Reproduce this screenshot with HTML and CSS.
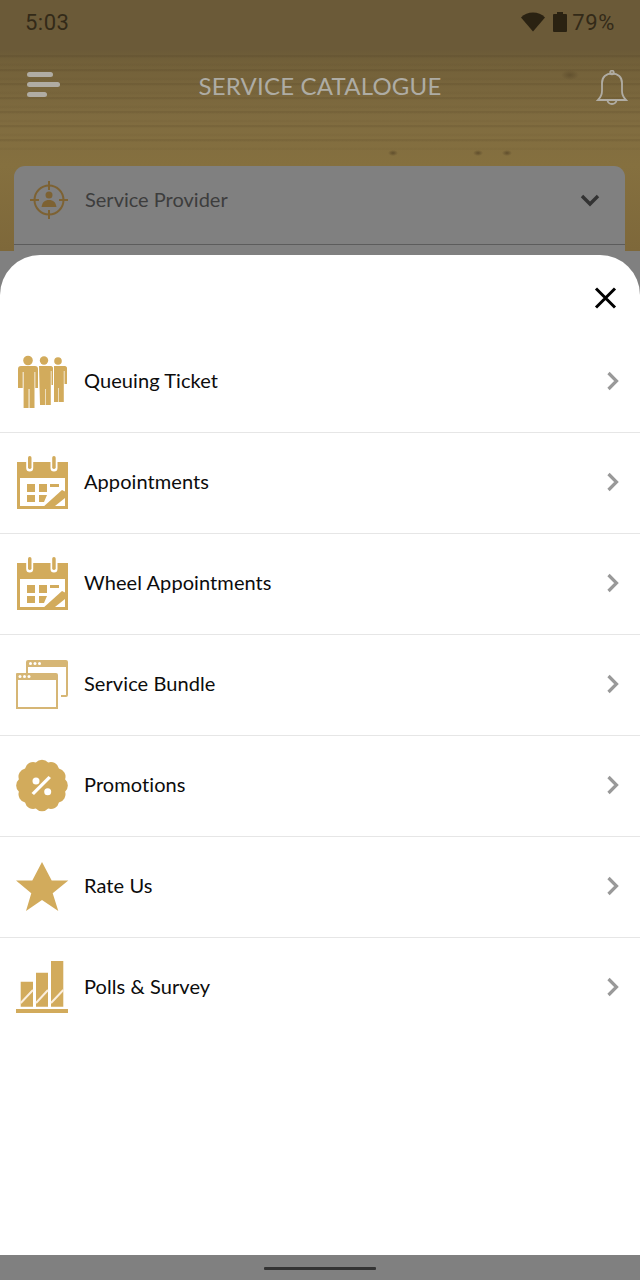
FILE: index.html
```html
<!DOCTYPE html>
<html lang="en">
<head>
<meta charset="utf-8">
<title>Service Catalogue</title>
<link rel="stylesheet" href="styles.css">
</head>
<body>
<div class="phone">
  <div class="screen">
    <div class="status">
      <span class="time">5:03</span>
      <div class="status-right">
        <svg class="wifi" width="24" height="20" viewBox="0 0 24 20"><path d="M0 5.500C3 2 7.500 0.500 12 0.500S21 2 24 5.500L12 19.500Z"/></svg>
        <svg class="battery" width="14" height="20" viewBox="0 0 14 20"><path d="M4 0h6v2h3a1 1 0 0 1 1 1v16a1 1 0 0 1-1 1H1a1 1 0 0 1-1-1V3a1 1 0 0 1 1-1h3z"/></svg>
        <span class="pct">79%</span>
      </div>
    </div>
    <header class="appbar">
      <div class="burger"><i class="b1"></i><i class="b2"></i><i class="b3"></i></div>
      <h1 class="title">SERVICE CATALOGUE</h1>
      <svg class="bell" width="32" height="36" viewBox="0 0 32 36"><path d="M2 30c3-3 4-5 4-9v-8C6 7 10 3.500 16 3.500S26 7 26 13v8c0 4 1 6 4 9Z"/><circle cx="16" cy="2.500" r="1.800"/><path d="M11.500 30a4.500 4 0 0 0 9 0"/></svg>
    </header>
    <div class="card">
      <div class="provider">
        <svg class="target" width="38" height="40" viewBox="0 0 38 40"><circle cx="19" cy="20" r="14.500"/><path d="M19 1v9M19 30v9M0 20h9M29 20h9"/><circle class="solid" cx="19" cy="15" r="3.500"/><path class="solid" d="M11.500 27c1-5 3-7 7.500-7s6.500 2 7.500 7Z"/></svg>
        <span class="provider-label">Service Provider</span>
        <svg class="caret" width="20" height="13" viewBox="0 0 20 13"><path d="M2 2l8 8 8-8"/></svg>
      </div>
    </div>
  </div>
  <div class="navbar"><span class="pill"></span></div>

  <section class="sheet">
    <div class="sheet-top">
      <svg class="close" width="24" height="24" viewBox="0 0 24 24"><path d="M3 2.500l19 19M22 2.500l-19 19"/></svg>
    </div>
    <ul class="menu">
      <li class="row">
        <svg class="ico" width="56" height="56" viewBox="0 0 56 56"><circle cx="44" cy="7" r="3.800"/><path d="M40 12h11c1 0 2 1 2 2v16h-2.500V17h-.7v31h-4.900V34h-.6v14h-4.300Z"/><circle cx="30" cy="6.500" r="4.200"/><path d="M25 12h12c1 0 2 1 2 2v17h-1.500V17h-.7v34h-5V35h-.6v16h-5.200Z"/><circle cx="14" cy="6.500" r="4.800"/><path d="M7 12h14c2 0 3 1 3 3v19h-2.700V18h-.8v36h-5V35h-.9v19h-5V18H8.700v16H4V15c0-2 1-3 3-3Z"/></svg>
        <span class="label">Queuing Ticket</span>
        <svg class="chev" width="14" height="20" viewBox="0 0 14 20"><path d="M2.500 2l8 8-8 8"/></svg>
      </li>
      <li class="row">
        <svg class="ico" width="56" height="56" viewBox="0 0 56 56"><path d="M3 7h51v47H3Z"/><path class="hole" d="M6 23h45v28H6Z"/><path class="hole" d="M12.200 7h7v6a3.500 3.500 0 0 1-7 0ZM36.500 7h7v6a3.500 3.500 0 0 1-7 0Z"/><rect x="14" y="1" width="3.500" height="13" rx="1.700"/><rect x="38.200" y="1" width="3.500" height="13" rx="1.700"/><path d="M13 29h8v8h-8ZM25 29h8v8h-8ZM13 40h8v7h-8ZM25 40h8l-3 7h-5ZM36 29h9v3h-9Z"/><path d="M28 53l20-18 6 3v15Z"/><path class="hole" d="M41 51l10-8v8Z"/></svg>
        <span class="label">Appointments</span>
        <svg class="chev" width="14" height="20" viewBox="0 0 14 20"><path d="M2.500 2l8 8-8 8"/></svg>
      </li>
      <li class="row">
        <svg class="ico" width="56" height="56" viewBox="0 0 56 56"><path d="M3 7h51v47H3Z"/><path class="hole" d="M6 23h45v28H6Z"/><path class="hole" d="M12.200 7h7v6a3.500 3.500 0 0 1-7 0ZM36.500 7h7v6a3.500 3.500 0 0 1-7 0Z"/><rect x="14" y="1" width="3.500" height="13" rx="1.700"/><rect x="38.200" y="1" width="3.500" height="13" rx="1.700"/><path d="M13 29h8v8h-8ZM25 29h8v8h-8ZM13 40h8v7h-8ZM25 40h8l-3 7h-5ZM36 29h9v3h-9Z"/><path d="M28 53l20-18 6 3v15Z"/><path class="hole" d="M41 51l10-8v8Z"/></svg>
        <span class="label">Wheel Appointments</span>
        <svg class="chev" width="14" height="20" viewBox="0 0 14 20"><path d="M2.500 2l8 8-8 8"/></svg>
      </li>
      <li class="row">
        <svg class="ico ico-pale" width="56" height="56" viewBox="0 0 56 56"><path d="M14 3h38a2 2 0 0 1 2 2v33a2 2 0 0 1-2 2h-5v-2h5V10H14v6h-2V5a2 2 0 0 1 2-2Z"/><path d="M3 16h39a2 2 0 0 1 2 2v34H2V17a1 1 0 0 1 1-1Zm1 7v27h38V23Z"/><g class="hole"><circle cx="6" cy="19.500" r="1.500"/><circle cx="10.500" cy="19.500" r="1.500"/><circle cx="15" cy="19.500" r="1.500"/><circle cx="16.500" cy="6.500" r="1.500"/><circle cx="21" cy="6.500" r="1.500"/><circle cx="25.500" cy="6.500" r="1.500"/></g></svg>
        <span class="label">Service Bundle</span>
        <svg class="chev" width="14" height="20" viewBox="0 0 14 20"><path d="M2.500 2l8 8-8 8"/></svg>
      </li>
      <li class="row">
        <svg class="ico" width="56" height="56" viewBox="0 0 56 56"><path transform="translate(28 27.500) scale(1.040)" d="M-5.950-22.200A8 8 0 0 1 5.950-22.200A8 8 0 0 1 16.260-16.260A8 8 0 0 1 22.200-5.950A8 8 0 0 1 22.200 5.950A8 8 0 0 1 16.260 16.260A8 8 0 0 1 5.950 22.200A8 8 0 0 1-5.950 22.200A8 8 0 0 1-16.260 16.260A8 8 0 0 1-22.200 5.950A8 8 0 0 1-22.200-5.950A8 8 0 0 1-16.260-16.260A8 8 0 0 1-5.950-22.200Z"/><g class="hole"><circle cx="22" cy="23" r="3.500"/><circle cx="33.700" cy="33.700" r="3.500"/><path d="M34.500 18l2.500 2-17 17-2.500-2Z"/></g></svg>
        <span class="label">Promotions</span>
        <svg class="chev" width="14" height="20" viewBox="0 0 14 20"><path d="M2.500 2l8 8-8 8"/></svg>
      </li>
      <li class="row">
        <svg class="ico" width="56" height="56" viewBox="0 0 56 56"><path d="M28 3l9.700 18.600H54.300L38.700 34.300 44.300 52 28 41 12 52 17.300 34.300 2 21.600H18.300Z"/></svg>
        <span class="label">Rate Us</span>
        <svg class="chev" width="14" height="20" viewBox="0 0 14 20"><path d="M2.500 2l8 8-8 8"/></svg>
      </li>
      <li class="row">
        <svg class="ico" width="56" height="56" viewBox="0 0 56 56"><path d="M6.700 21.700H19v25H6.700ZM22 12.700h12v34H22ZM37 1h12.300v45.700H37ZM2 49h52v4H2Z"/><path class="slash" d="M6.700 43L19 30M22 43L34 30M37 43L49.300 30"/></svg>
        <span class="label">Polls &amp; Survey</span>
        <svg class="chev" width="14" height="20" viewBox="0 0 14 20"><path d="M2.500 2l8 8-8 8"/></svg>
      </li>
    </ul>
  </section>
</div>
</body>
</html>
```

FILE: styles.css
```css
* { box-sizing: border-box; }
html, body { margin: 0; padding: 0; background: #808080; }
body { font-family: Lato, "Noto Sans", sans-serif; }

.phone {
  position: relative;
  width: 640px;
  height: 1280px;
  overflow: hidden;
  display: flex;
  flex-direction: column;
  background: #808080;
}

.screen {
  flex: 1;
  min-height: 0;
  background-color: #808080;
  background-image:
    radial-gradient(ellipse 9px 5px at 570px 75px, rgba(70,55,30,.4), transparent),
    radial-gradient(ellipse 5px 3px at 393px 153px, rgba(60,45,25,.5), transparent),
    radial-gradient(ellipse 5px 3px at 478px 153px, rgba(60,45,25,.5), transparent),
    radial-gradient(ellipse 5px 3px at 507px 153px, rgba(60,45,25,.5), transparent),
    repeating-linear-gradient(180deg, rgba(50,35,15,.1) 0, rgba(50,35,15,.1) 1.5px, transparent 3px, transparent 8px, rgba(50,35,15,.05) 10px, transparent 12px, transparent 14px),
    linear-gradient(180deg, #6b5a38 0, #6b5a38 50px, #726039 62px, #806c40 120px, #85703f 165px, #7e683a 251px);
  background-size: 100% 251px, 100% 251px, 100% 251px, 100% 251px, 100% 95px, 100% 251px;
  background-position: 0 0, 0 0, 0 0, 0 0, 0 55px, 0 0;
  background-repeat: no-repeat;
}

.status {
  height: 44px;
  padding: 0 25px;
  display: flex;
  align-items: center;
  justify-content: space-between;
  color: #332a18;
}
.time { font-size: 22px; font-family: Roboto, sans-serif; letter-spacing: .5px; }
.status-right { display: flex; align-items: center; }
.wifi { fill: #2a2212; margin-right: 8px; }
.battery { fill: #2a2212; margin-right: 5px; }
.pct { font-size: 22px; font-family: Roboto, sans-serif; letter-spacing: .6px; }

.appbar {
  height: 84px;
  padding: 0 12px 0 27px;
  display: flex;
  align-items: center;
  justify-content: space-between;
}
.burger { width: 33px; display: flex; flex-direction: column; gap: 5px; margin-top: -4px; }
.burger i { display: block; height: 5px; border-radius: 3px; background: #b0aca3; }
.b1 { width: 26px; }
.b2 { width: 33px; }
.b3 { width: 20px; }
.title {
  margin: 0 0 2px -16px;
  font-size: 24px;
  font-weight: 400;
  color: #aeaca4;
  letter-spacing: .2px;
}
.bell { fill: none; stroke: #b0aca3; stroke-width: 1.8; margin-top: 3px; }

.card {
  margin: 38px 15px 0 14px;
  height: 100px;
  border-radius: 11px 11px 0 0;
  background: #808080;
}
.provider {
  height: 79px;
  padding: 0 25px 10px 16px;
  display: flex;
  align-items: center;
  border-bottom: 1px solid #5c5c5c;
}
.target { fill: none; stroke: #7d6233; stroke-width: 2; flex: none; }
.target .solid { fill: #7d6233; stroke: none; }
.provider-label { margin: 0 0 2px 17px; flex: 1; font-size: 20px; color: #3d3d3d; }
.caret { fill: none; stroke: #333; stroke-width: 3.400; }

.navbar {
  height: 25px;
  flex: none;
  display: flex;
  align-items: center;
  justify-content: center;
  padding-top: 1px;
  background: #808080;
}
.pill { width: 112px; height: 3px; background: #333; border-radius: 1px; }

.sheet {
  position: absolute;
  left: 0;
  right: 0;
  top: 255px;
  bottom: 25px;
  background: #fff;
  border-radius: 40px 40px 0 0;
}
.sheet-top {
  height: 77px;
  padding: 31px 23px 0 0;
  display: flex;
  justify-content: flex-end;
  align-items: flex-start;
}
.close { fill: none; stroke: #000; stroke-width: 3; }

.menu { list-style: none; margin: 0; padding: 0; }
.row {
  height: 101px;
  padding: 0 20px 1px 14px;
  display: flex;
  align-items: center;
  border-bottom: 1px solid #e6e6e6;
}
.row:last-child { border-bottom: 0; }
.ico { flex: none; fill: #d2ab5c; }
.ico-pale { fill: #d6b675; }
.ico .hole { fill: #fff; }
.ico .slash { fill: none; stroke: #fbeedd; stroke-width: 2; }
.label { margin: 0 0 4px 14px; flex: 1; font-size: 20px; color: #0c0c0c; letter-spacing: .08px; }
.chev { flex: none; margin-bottom: 2px; fill: none; stroke: #999; stroke-width: 3.200; }
```
